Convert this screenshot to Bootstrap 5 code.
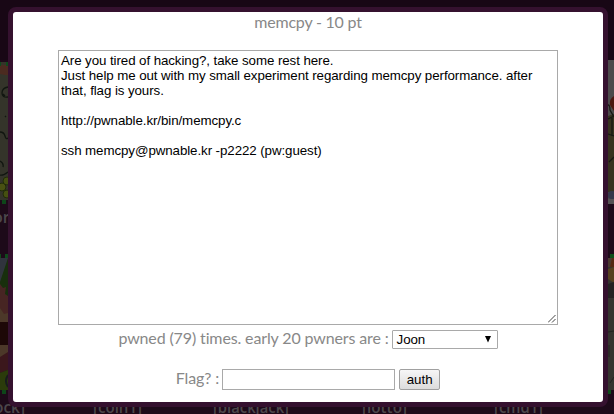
<!DOCTYPE html>
<html lang="en">
<head>
<meta charset="utf-8">
<title>memcpy</title>
<link href="https://cdn.jsdelivr.net/npm/bootstrap@5.3.0/dist/css/bootstrap.min.css" rel="stylesheet">
<style>
  body { background: #1d0a19; height: 414px; font-family: Lato, sans-serif; font-size: 16px; color: #888; }
  .backdrop-art { z-index: 0; }
  .backdrop-art text { font: 600 16px "Open Sans", sans-serif; fill: #4c474b; }
  .task-dialog { z-index: 1; width: 600px; height: 400px; margin: 7px 0 0 8px; border: 5px solid #35112f; border-radius: 8px; line-height: 20px; letter-spacing: -.13px; }
  .task-title { letter-spacing: -.22px; }
  .task-text { width: 500px; height: 275px; margin-top: 18px; padding: 2px; border: 1px solid #a9a9a9; border-radius: 0; font: 13.333px/15px "Liberation Sans", Arial, sans-serif; letter-spacing: -.085px; color: #000; resize: none; overflow: hidden; }
  .text-wrap-box { width: 500px; height: 293px; }
  .grip { right: 2px; bottom: 2px; }
  .pwner-row { height: 20px; margin-top: 4px; gap: 3px; }
  .pwner-row > span { padding-bottom: 2px; }
  .flag-row > label { padding-bottom: 3px; }
  .flag-row { height: 21px; margin-top: 20px; }
  .pwner-pick { width: 106px; height: 19px; padding: 0 5px 0 4px; border: 1px solid #a9a9a9; border-radius: 1px; background: #fff; font: 13.333px/17px "Liberation Sans", Arial, sans-serif; color: #000; }
  .flag-input { width: 173px; height: 21px; padding: 1px; border: 1px solid #a9a9a9; border-radius: 0; margin: 0 4px 0 3px; }
  .auth-btn { width: 41px; height: 21px; padding: 0; border: 1px solid #a0a0a0; border-radius: 2px; background: linear-gradient(#f6f6f6, #dcdcdc); font: 13.333px/19px "Liberation Sans", Arial, sans-serif; color: #000; }
</style>
<script src="https://cdn.jsdelivr.net/npm/bootstrap@5.3.0/dist/js/bootstrap.bundle.min.js"></script>
</head>
<body class="position-relative overflow-hidden m-0">
<svg class="backdrop-art position-absolute top-0 start-0" width="614" height="414" aria-hidden="true">
  <rect width="614" height="60" fill="#180715"/>
  <!-- upper left thumbnail -->
  <rect y="62" width="8" height="138" fill="#34342a"/>
  <path d="M0 65h8v10H5L0 74z" fill="#4b2b20"/>
  <path d="M0 62h1v4H0zM6 62h2v4H6z" fill="#0f4a1b"/>
  <path d="M8 87q-6 1-6 6t6 4M3 94l2 2M0 132q4 0 5 4t3 2M5 116l1 1M0 161q4 2 3 6M8 172q-5 4-8 3" fill="none" stroke="#111610" stroke-width="1.3"/>
  <circle cx="2" cy="187" r="4" fill="#495112" stroke="#202b09"/>
  <circle cx="7" cy="181" r="4" fill="#465011" stroke="#202b09"/>
  <circle cx="7" cy="194" r="4" fill="#465011" stroke="#202b09"/>
  <rect x="2" y="200" width="4" height="4" fill="#0d4619"/>
  <text x="-7" y="223">or</text>
  <!-- lower left thumbnail -->
  <rect y="258" width="8" height="132" fill="#182f0d"/>
  <path d="M0 254h1v4H0zM5 254h3v4H5z" fill="#0f4a1b"/>
  <path d="M0 258h8l-4 12-4 12z" fill="#30343d"/>
  <path d="M0 284l3 4 3-1-1 7 3 2v23H0z" fill="#472523"/>
  <path d="M0 308l4 6 4-1v9H0zM0 345h8v9l-8 6z" fill="#4c3829"/>
  <rect y="322" width="8" height="23" fill="#1d0807"/>
  <path d="M0 357l8-5v18l-8 3z" fill="#3b171c"/>
  <path d="M0 373l8-3v20H0z" fill="#2b3b0b"/>
  <path d="M8 375q-4 6 0 12" fill="none" stroke="#171b1d" stroke-width="2"/>
  <rect x="2" y="390" width="4" height="4" fill="#0d4619"/>
  <!-- upper right thumbnail -->
  <rect x="608" y="60" width="6" height="144" fill="#4c4a4b"/>
  <path d="M608 116l6-2v78h-6z" fill="#37331f"/>
  <path d="M614 96q-5 3-4 9l4 6z" fill="#4c170f"/>
  <path d="M608 105q2 0 2 5l4 7M608 119l6-3M608 134l6 2M609 162l5-5M612 118v18" fill="none" stroke="#171913" stroke-width="1.3"/>
  <ellipse cx="612" cy="195" rx="5" ry="4" fill="#35384a"/>
  <rect x="608" y="199" width="6" height="5" fill="#555254"/>
  <!-- lower right thumbnail -->
  <rect x="608" y="258" width="6" height="132" fill="#35342f"/>
  <rect x="610" y="254" width="4" height="4" fill="#0d4e19"/>
  <path d="M608 258h4v9h-4z" fill="#4b3930"/>
  <path d="M612 258h2v9h-4z" fill="#552812"/>
  <path d="M608 269l6-2v16l-6-4z" fill="#56401f"/>
  <path d="M608 284l6-2v16h-6z" fill="#242222"/>
  <path d="M608 332l6-1M614 377l-4 6M609 345v12" fill="none" stroke="#232320"/>
  <rect x="608" y="390" width="3" height="4" fill="#0d4e19"/>
  <!-- labels under the thumbnails -->
  <text x="-6" y="413" textLength="31" lengthAdjust="spacingAndGlyphs">ock]</text>
  <text x="93" y="413" textLength="49" lengthAdjust="spacingAndGlyphs">[coin1]</text>
  <text x="213" y="413" textLength="76" lengthAdjust="spacingAndGlyphs">[blackjack]</text>
  <text x="362" y="413" textLength="45" lengthAdjust="spacingAndGlyphs">[lotto]</text>
  <text x="494" y="413" textLength="49" lengthAdjust="spacingAndGlyphs">[cmd1]</text>
</svg>
<main class="task-dialog position-relative d-flex flex-column align-items-center bg-white">
  <div class="task-title">memcpy - 10 pt</div>
  <div class="text-wrap-box position-relative">
    <textarea class="task-text d-block" readonly aria-label="Description">Are you tired of hacking?, take some rest here.
Just help me out with my small experiment regarding memcpy performance. after that, flag is yours.

http://pwnable.kr/bin/memcpy.c

ssh memcpy@pwnable.kr -p2222 (pw:guest)</textarea>
    <svg class="grip position-absolute" width="8" height="8" aria-hidden="true"><path d="M0 7.500L7.500 0M4 7.500L7.500 4" stroke="#444" fill="none"/></svg>
  </div>
  <div class="pwner-row d-flex align-items-center">
    <span>pwned (79) times. early 20 pwners are :</span>
    <div class="pwner-pick d-flex justify-content-between align-items-center" role="combobox" aria-label="Early pwners">
      <span>Joon</span>
      <svg width="8" height="7" aria-hidden="true"><path d="M1 0h6L4 6.500z" fill="#000"/></svg>
    </div>
  </div>
  <form class="flag-row d-flex align-items-center">
    <label for="flag">Flag? :</label>
    <input id="flag" class="flag-input" type="text">
    <button type="button" class="auth-btn">auth</button>
  </form>
</main>
</body>
</html>
